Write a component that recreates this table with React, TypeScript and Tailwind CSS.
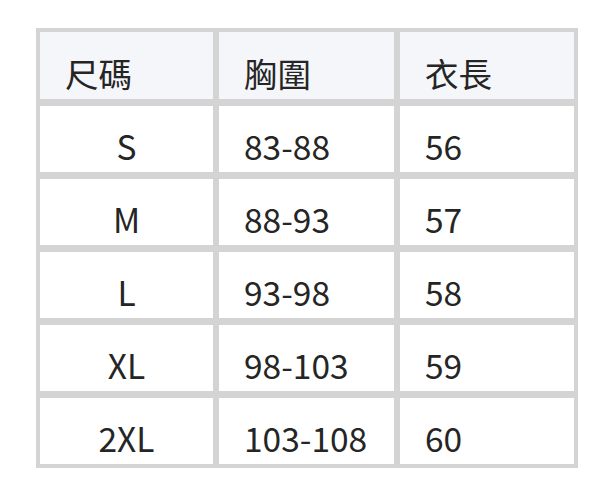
const rows = [
  ['S', '83-88', '56'],
  ['M', '88-93', '57'],
  ['L', '93-98', '58'],
  ['XL', '98-103', '59'],
  ['2XL', '103-108', '60'],
];

export default function App() {
  return (
    <div className="min-h-screen bg-white pl-[36px] pt-[28px] font-['Noto_Sans_CJK_TC','Noto_Sans',sans-serif] text-[#252525]">
      <div className="grid w-[542px] grid-cols-[173px_175px_174px] grid-rows-[67px_repeat(5,66px)] gap-x-[6px] gap-y-[7px] bg-[#d4d4d4] p-[4px] text-[33.5px] leading-normal">
        {/* header */}
        <div className="flex items-end bg-[#f5f6fa] pb-[1px] pl-[25px]">尺碼</div>
        <div className="flex items-end bg-[#f5f6fa] pb-[1px] pl-[25px]">胸圍</div>
        <div className="flex items-end bg-[#f5f6fa] pb-[1px] pl-[25px]">衣長</div>

        {rows.map((r) => (
          <div key={r[0]} className="contents">
            <div className="flex items-end justify-center bg-white pb-[1px]">{r[0]}</div>
            <div className="flex items-end bg-white pb-[1px] pl-[25px]">{r[1]}</div>
            <div className="flex items-end bg-white pb-[1px] pl-[25px]">{r[2]}</div>
          </div>
        ))}
      </div>
    </div>
  );
}
